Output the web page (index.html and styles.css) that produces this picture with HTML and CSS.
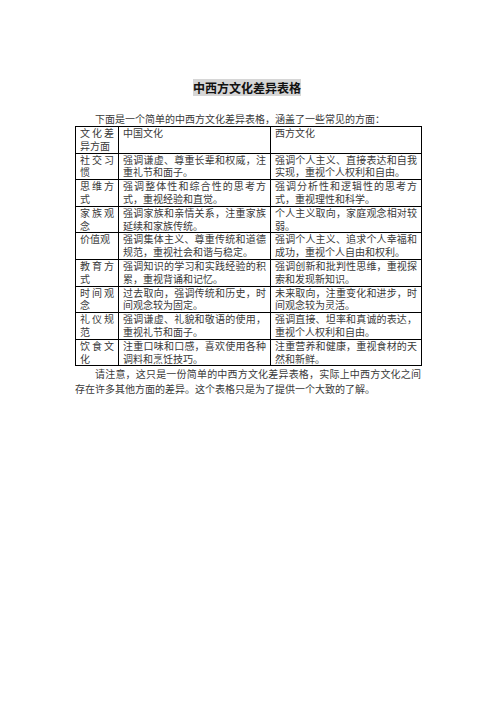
FILE: index.html
```html
<!DOCTYPE html>
<html lang="zh-CN">
<head>
<meta charset="utf-8">
<title>中西方文化差异表格</title>
<link rel="stylesheet" href="styles.css">
</head>
<body>
<div class="page">
  <h1 class="title"><span class="mark">中西方文化差异表格</span></h1>
  <p class="intro">下面是一个简单的中西方文化差异表格，涵盖了一些常见的方面：</p>
  <table class="diff">
    <colgroup>
      <col class="c1"><col class="c2"><col class="c3">
    </colgroup>
    <tr><td>文化差异方面</td><td>中国文化</td><td>西方文化</td></tr>
    <tr><td>社交习惯</td><td>强调谦虚、尊重长辈和权威，注重礼节和面子。</td><td>强调个人主义、直接表达和自我实现，重视个人权利和自由。</td></tr>
    <tr><td>思维方式</td><td>强调整体性和综合性的思考方式，重视经验和直觉。</td><td>强调分析性和逻辑性的思考方式，重视理性和科学。</td></tr>
    <tr><td>家族观念</td><td>强调家族和亲情关系，注重家族延续和家族传统。</td><td>个人主义取向，家庭观念相对较弱。</td></tr>
    <tr><td>价值观</td><td>强调集体主义、尊重传统和道德规范，重视社会和谐与稳定。</td><td>强调个人主义、追求个人幸福和成功，重视个人自由和权利。</td></tr>
    <tr><td>教育方式</td><td>强调知识的学习和实践经验的积累，重视背诵和记忆。</td><td>强调创新和批判性思维，重视探索和发现新知识。</td></tr>
    <tr><td>时间观念</td><td>过去取向，强调传统和历史，时间观念较为固定。</td><td>未来取向，注重变化和进步，时间观念较为灵活。</td></tr>
    <tr><td>礼仪规范</td><td>强调谦虚、礼貌和敬语的使用，重视礼节和面子。</td><td>强调直接、坦率和真诚的表达，重视个人权利和自由。</td></tr>
    <tr><td>饮食文化</td><td>注重口味和口感，喜欢使用各种调料和烹饪技巧。</td><td>注重营养和健康，重视食材的天然和新鲜。</td></tr>
  </table>
  <p class="note">请注意，这只是一份简单的中西方文化差异表格，实际上中西方文化之间存在许多其他方面的差异。这个表格只是为了提供一个大致的了解。</p>
</div>
</body>
</html>
```
FILE: styles.css
```css
html, body {
  margin: 0;
  padding: 0;
  background: #ffffff;
}
body {
  font-family: "Noto Sans CJK SC", "Noto Sans", sans-serif;
  color: #3a3a3a;
}
.page {
  width: 346px;
  margin-left: 75px;
  padding-top: 79px;
}
.title {
  margin: 0 0 0 -2px;
  text-align: center;
  font-size: 12px;
  font-weight: 700;
  line-height: 18px;
  color: #111;
}
.mark {
  background: #d6d6d6;
}
.intro {
  margin: 15px 0 1px 0;
  font-size: 10px;
  line-height: 13px;
  text-indent: 20px;
}
.diff {
  width: 346px;
  table-layout: fixed;
  border-collapse: collapse;
  font-size: 10px;
  line-height: 12.8px;
}
.c1 { width: 43px; }
.c2 { width: 152px; }
.c3 { width: 151px; }
.diff td {
  border: 1px solid #000;
  padding: 0 4px 0 4px;
  vertical-align: top;
  text-align: justify;
}
.note {
  margin: 0;
  font-size: 10px;
  line-height: 15px;
  text-indent: 20px;
  text-align: justify;
}
```
